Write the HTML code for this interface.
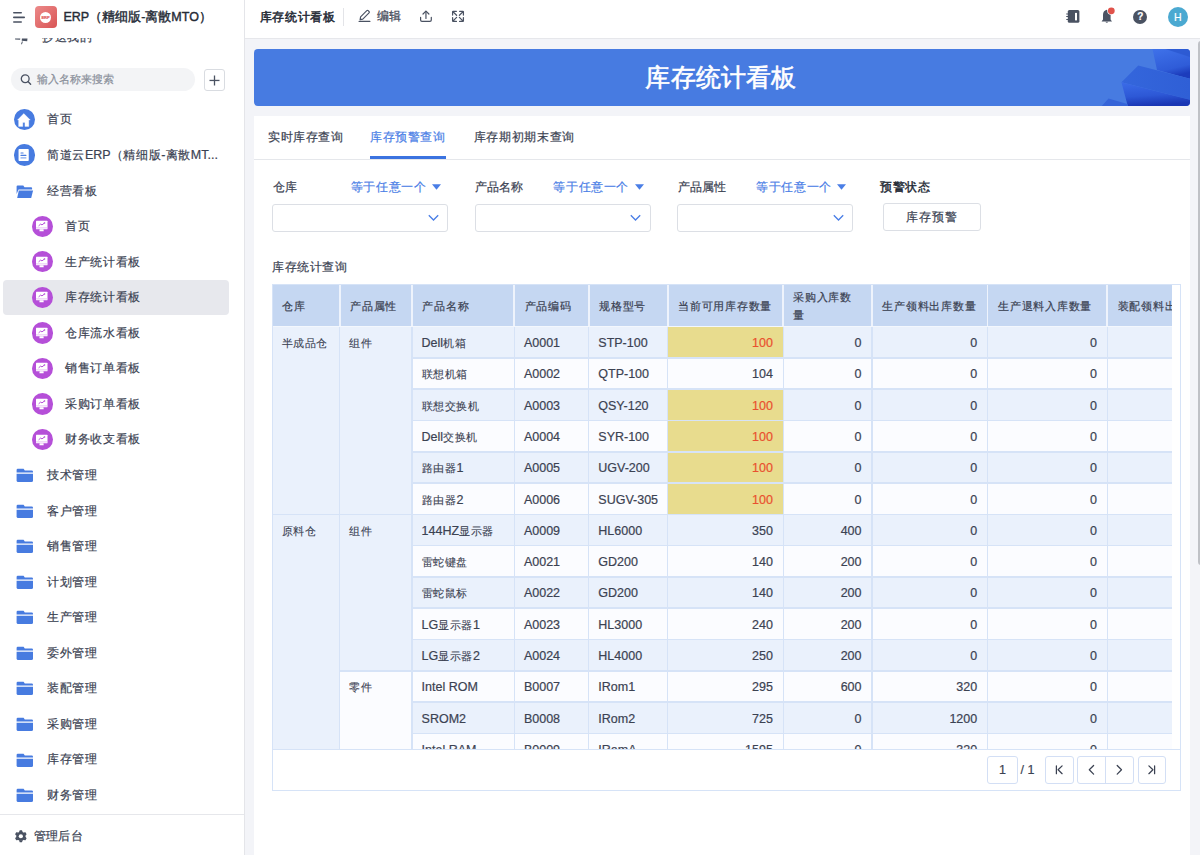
<!DOCTYPE html><html><head><meta charset="utf-8"><style>
*{box-sizing:border-box;margin:0;padding:0}
html,body{width:1200px;height:855px;overflow:hidden}
body{position:relative;background:#f3f4f8;font-family:"Liberation Sans",sans-serif;color:#3b4252;font-size:12.5px;-webkit-text-stroke-width:0.2px}
.a{position:absolute;white-space:nowrap}
#side{left:0;top:0;width:245px;height:855px;background:#fff;border-right:1px solid #e4e5e9;overflow:hidden}
#top{left:245px;top:0;width:955px;height:39px;background:#fff;border-bottom:1px solid #e6e7eb}
#banner{left:254px;top:48.5px;width:935.5px;height:57.4px;background:#477be1;border-radius:4px;overflow:hidden}
#card{left:254px;top:115.5px;width:935.5px;height:740px;background:#fff}
.nt{font-size:12.5px;line-height:17px;color:#3b4252}
.tb{border-collapse:separate;border-spacing:0}
</style></head><body>
<div id="side" class="a">
<div class="a" style="left:0;top:37.5px;width:244px;height:8px;overflow:hidden"><div class="a nt" style="left:42px;top:-8.2px;font-size:12px;letter-spacing:0.66px">抄送我的</div><svg class="a" style="left:0;top:0" width="40" height="8" viewBox="0 37.5 40 8"><g fill="#4a5262"><path d="M15 38 L20.3 38 L20.1 39.3 L15.1 39.1 Z"/><path d="M21.9 37.9 L27.5 38.1 L27.2 40.8 L21.7 40.3 Z"/><path d="M21.9 40.9 L22.9 41.1 L21.9 43.9 L21.1 43.6 Z"/></g></svg></div>
<svg class="a" style="left:12px;top:11px" width="14" height="13" viewBox="0 0 14 13"><rect x="1" y="1" width="9" height="1.6" rx=".8" fill="#4a5262"/><rect x="1" y="5.6" width="12" height="1.6" rx=".8" fill="#4a5262"/><rect x="1" y="10.2" width="9" height="1.6" rx=".8" fill="#4a5262"/></svg>
<div class="a" style="left:35px;top:6px;width:21.5px;height:22px;border-radius:4px;background:linear-gradient(135deg,#ec8a8a,#d95555)"><div class="a" style="left:4.8px;top:5.5px;width:11.5px;height:11.5px;border-radius:50%;background:#fff;font-size:4px;line-height:11.5px;text-align:center;color:#e06060;font-weight:bold">ERP</div></div>
<div class="a" style="left:63.5px;top:9px;font-size:12.5px;line-height:17px;-webkit-text-stroke-width:0.4px;color:#252b36">ERP（精细版-离散MTO）</div>
<div class="a" style="left:10.5px;top:68px;width:184px;height:22.5px;border-radius:12px;background:#f3f4f6"></div>
<svg class="a" style="left:19.5px;top:74px" width="13" height="11" viewBox="0 0 13 11"><circle cx="5.2" cy="4.8" r="3.9" fill="none" stroke="#4a5262" stroke-width="1.3"/><line x1="8" y1="7.6" x2="10.6" y2="10.2" stroke="#4a5262" stroke-width="1.4" stroke-linecap="round"/></svg>
<div class="a" style="left:36.5px;top:72px;font-size:10.8px;line-height:14px;color:#8a909b">输入名称来搜索</div>
<div class="a" style="left:204px;top:69px;width:20.5px;height:21.5px;border:1px solid #d9dce1;border-radius:3px;background:#fff"></div>
<svg class="a" style="left:209px;top:75px" width="11" height="11" viewBox="0 0 11 11"><rect x="0.5" y="4.8" width="10" height="1.3" fill="#4a5262"/><rect x="4.85" y="0.5" width="1.3" height="10" fill="#4a5262"/></svg>
<div class="a" style="left:13.8px;top:109.0px;width:21px;height:21px;border-radius:50%;background:#477be0"></div><svg class="a" style="left:17.3px;top:112.5px" width="14" height="14" viewBox="0 0 14 14"><path d="M6.8 0.45 L13.3 7.05 L11.8 7.05 L11.8 13.45 L7.9 13.45 L7.9 9.45 L5.8 9.45 L5.8 13.45 L1.6 13.45 L1.6 7.05 L0.45 7.05 Z" fill="#fff" stroke="#fff" stroke-width="0.3" stroke-linejoin="round"/></svg>
<div class="a nt" style="left:47px;top:111.4px"><span style="font-size:12px;letter-spacing:0.66px">首页</span></div>
<div class="a" style="left:13.700000000000001px;top:144.36px;width:21.2px;height:21.4px;border-radius:50%;background:#477be0"></div><svg class="a" style="left:17.3px;top:148.06px" width="14" height="14" viewBox="0 0 14 14"><rect x="1.55" y="1" width="10.2" height="12" rx="0.8" fill="#fff"/><rect x="3.45" y="4.4" width="3.2" height="1.1" rx=".5" fill="#477be0"/><rect x="3.45" y="6.75" width="6" height="1.2" rx=".5" fill="#477be0"/><rect x="3.45" y="9.2" width="6" height="1.4" rx=".5" fill="#86a9ee"/></svg>
<div class="a nt" style="left:47px;top:146.96px"><span style="font-size:12px;letter-spacing:0.66px">简道云</span>ERP<span style="font-size:12px;letter-spacing:0.66px">（精细版</span>-<span style="font-size:12px;letter-spacing:0.66px">离散</span>MT...</div>
<svg class="a" style="left:15.5px;top:183.62px" width="18" height="15" viewBox="0 0 18 15"><path d="M0.6 2.4 Q0.6 1.4 1.6 1.4 L7.3 1.4 L8.5 3.2 L15.1 3.2 Q16.1 3.2 16.1 4.2 L16.1 5.4 L2.6 5.4 L0.6 10 Z" fill="#477be0"/><path d="M2.8 6.6 L17.1 6.6 L15.2 13.9 L1.2 13.9 Z" fill="#477be0"/></svg>
<div class="a nt" style="left:47px;top:182.52px"><span style="font-size:12px;letter-spacing:0.66px">经营看板</span></div>
<div class="a" style="left:31.5px;top:215.53px;width:21.2px;height:21.3px;border-radius:50%;background:#b54fd8"></div><svg class="a" style="left:35.1px;top:219.18px" width="14" height="14" viewBox="0 0 14 14"><rect x="1" y="1.85" width="11.5" height="8.5" rx="0.5" fill="#fff"/><rect x="1" y="8.5" width="11.5" height="0.8" fill="#e2b6f2"/><path d="M3.9 6.6 L5.6 5.1 L7 5.9 L9.2 4.2" stroke="#b54fd8" stroke-width="1" fill="none" stroke-linecap="round"/><circle cx="9.5" cy="4" r="0.8" fill="#b54fd8"/><path d="M4.6 10.3 L8.5 10.3 L8.7 12.3 L4.4 12.3 Z" fill="#fff"/></svg>
<div class="a nt" style="left:65px;top:218.08px"><span style="font-size:12px;letter-spacing:0.66px">首页</span></div>
<div class="a" style="left:31.5px;top:251.09px;width:21.2px;height:21.3px;border-radius:50%;background:#b54fd8"></div><svg class="a" style="left:35.1px;top:254.74px" width="14" height="14" viewBox="0 0 14 14"><rect x="1" y="1.85" width="11.5" height="8.5" rx="0.5" fill="#fff"/><rect x="1" y="8.5" width="11.5" height="0.8" fill="#e2b6f2"/><path d="M3.9 6.6 L5.6 5.1 L7 5.9 L9.2 4.2" stroke="#b54fd8" stroke-width="1" fill="none" stroke-linecap="round"/><circle cx="9.5" cy="4" r="0.8" fill="#b54fd8"/><path d="M4.6 10.3 L8.5 10.3 L8.7 12.3 L4.4 12.3 Z" fill="#fff"/></svg>
<div class="a nt" style="left:65px;top:253.64000000000001px"><span style="font-size:12px;letter-spacing:0.66px">生产统计看板</span></div>
<div class="a" style="left:3.2px;top:279.8px;width:225.7px;height:35px;border-radius:4px;background:#e7e8ed"></div>
<div class="a" style="left:31.5px;top:286.65000000000003px;width:21.2px;height:21.3px;border-radius:50%;background:#b54fd8"></div><svg class="a" style="left:35.1px;top:290.3px" width="14" height="14" viewBox="0 0 14 14"><rect x="1" y="1.85" width="11.5" height="8.5" rx="0.5" fill="#fff"/><rect x="1" y="8.5" width="11.5" height="0.8" fill="#e2b6f2"/><path d="M3.9 6.6 L5.6 5.1 L7 5.9 L9.2 4.2" stroke="#b54fd8" stroke-width="1" fill="none" stroke-linecap="round"/><circle cx="9.5" cy="4" r="0.8" fill="#b54fd8"/><path d="M4.6 10.3 L8.5 10.3 L8.7 12.3 L4.4 12.3 Z" fill="#fff"/></svg>
<div class="a nt" style="left:65px;top:289.2px"><span style="font-size:12px;letter-spacing:0.66px">库存统计看板</span></div>
<div class="a" style="left:31.5px;top:322.21000000000004px;width:21.2px;height:21.3px;border-radius:50%;background:#b54fd8"></div><svg class="a" style="left:35.1px;top:325.86px" width="14" height="14" viewBox="0 0 14 14"><rect x="1" y="1.85" width="11.5" height="8.5" rx="0.5" fill="#fff"/><rect x="1" y="8.5" width="11.5" height="0.8" fill="#e2b6f2"/><path d="M3.9 6.6 L5.6 5.1 L7 5.9 L9.2 4.2" stroke="#b54fd8" stroke-width="1" fill="none" stroke-linecap="round"/><circle cx="9.5" cy="4" r="0.8" fill="#b54fd8"/><path d="M4.6 10.3 L8.5 10.3 L8.7 12.3 L4.4 12.3 Z" fill="#fff"/></svg>
<div class="a nt" style="left:65px;top:324.76px"><span style="font-size:12px;letter-spacing:0.66px">仓库流水看板</span></div>
<div class="a" style="left:31.5px;top:357.77000000000004px;width:21.2px;height:21.3px;border-radius:50%;background:#b54fd8"></div><svg class="a" style="left:35.1px;top:361.42px" width="14" height="14" viewBox="0 0 14 14"><rect x="1" y="1.85" width="11.5" height="8.5" rx="0.5" fill="#fff"/><rect x="1" y="8.5" width="11.5" height="0.8" fill="#e2b6f2"/><path d="M3.9 6.6 L5.6 5.1 L7 5.9 L9.2 4.2" stroke="#b54fd8" stroke-width="1" fill="none" stroke-linecap="round"/><circle cx="9.5" cy="4" r="0.8" fill="#b54fd8"/><path d="M4.6 10.3 L8.5 10.3 L8.7 12.3 L4.4 12.3 Z" fill="#fff"/></svg>
<div class="a nt" style="left:65px;top:360.32px"><span style="font-size:12px;letter-spacing:0.66px">销售订单看板</span></div>
<div class="a" style="left:31.5px;top:393.33000000000004px;width:21.2px;height:21.3px;border-radius:50%;background:#b54fd8"></div><svg class="a" style="left:35.1px;top:396.98px" width="14" height="14" viewBox="0 0 14 14"><rect x="1" y="1.85" width="11.5" height="8.5" rx="0.5" fill="#fff"/><rect x="1" y="8.5" width="11.5" height="0.8" fill="#e2b6f2"/><path d="M3.9 6.6 L5.6 5.1 L7 5.9 L9.2 4.2" stroke="#b54fd8" stroke-width="1" fill="none" stroke-linecap="round"/><circle cx="9.5" cy="4" r="0.8" fill="#b54fd8"/><path d="M4.6 10.3 L8.5 10.3 L8.7 12.3 L4.4 12.3 Z" fill="#fff"/></svg>
<div class="a nt" style="left:65px;top:395.88px"><span style="font-size:12px;letter-spacing:0.66px">采购订单看板</span></div>
<div class="a" style="left:31.5px;top:428.89000000000004px;width:21.2px;height:21.3px;border-radius:50%;background:#b54fd8"></div><svg class="a" style="left:35.1px;top:432.54px" width="14" height="14" viewBox="0 0 14 14"><rect x="1" y="1.85" width="11.5" height="8.5" rx="0.5" fill="#fff"/><rect x="1" y="8.5" width="11.5" height="0.8" fill="#e2b6f2"/><path d="M3.9 6.6 L5.6 5.1 L7 5.9 L9.2 4.2" stroke="#b54fd8" stroke-width="1" fill="none" stroke-linecap="round"/><circle cx="9.5" cy="4" r="0.8" fill="#b54fd8"/><path d="M4.6 10.3 L8.5 10.3 L8.7 12.3 L4.4 12.3 Z" fill="#fff"/></svg>
<div class="a nt" style="left:65px;top:431.44px"><span style="font-size:12px;letter-spacing:0.66px">财务收支看板</span></div>
<svg class="a" style="left:15.5px;top:468.1px" width="18" height="15" viewBox="0 0 18 15"><path d="M0.6 2 Q0.6 0.8 1.8 0.8 L7.6 0.8 L8.8 2.6 L15.8 2.6 Q17 2.6 17 3.8 L17 4.5 L0.6 4.5 Z" fill="#477be0"/><path d="M0.6 5.7 L17 5.7 L17 12.4 Q17 13.9 15.5 13.9 L2.1 13.9 Q0.6 13.9 0.6 12.4 Z" fill="#477be0"/></svg>
<div class="a nt" style="left:47px;top:467.0px"><span style="font-size:12px;letter-spacing:0.66px">技术管理</span></div>
<svg class="a" style="left:15.5px;top:503.66px" width="18" height="15" viewBox="0 0 18 15"><path d="M0.6 2 Q0.6 0.8 1.8 0.8 L7.6 0.8 L8.8 2.6 L15.8 2.6 Q17 2.6 17 3.8 L17 4.5 L0.6 4.5 Z" fill="#477be0"/><path d="M0.6 5.7 L17 5.7 L17 12.4 Q17 13.9 15.5 13.9 L2.1 13.9 Q0.6 13.9 0.6 12.4 Z" fill="#477be0"/></svg>
<div class="a nt" style="left:47px;top:502.56px"><span style="font-size:12px;letter-spacing:0.66px">客户管理</span></div>
<svg class="a" style="left:15.5px;top:539.22px" width="18" height="15" viewBox="0 0 18 15"><path d="M0.6 2 Q0.6 0.8 1.8 0.8 L7.6 0.8 L8.8 2.6 L15.8 2.6 Q17 2.6 17 3.8 L17 4.5 L0.6 4.5 Z" fill="#477be0"/><path d="M0.6 5.7 L17 5.7 L17 12.4 Q17 13.9 15.5 13.9 L2.1 13.9 Q0.6 13.9 0.6 12.4 Z" fill="#477be0"/></svg>
<div class="a nt" style="left:47px;top:538.12px"><span style="font-size:12px;letter-spacing:0.66px">销售管理</span></div>
<svg class="a" style="left:15.5px;top:574.78px" width="18" height="15" viewBox="0 0 18 15"><path d="M0.6 2 Q0.6 0.8 1.8 0.8 L7.6 0.8 L8.8 2.6 L15.8 2.6 Q17 2.6 17 3.8 L17 4.5 L0.6 4.5 Z" fill="#477be0"/><path d="M0.6 5.7 L17 5.7 L17 12.4 Q17 13.9 15.5 13.9 L2.1 13.9 Q0.6 13.9 0.6 12.4 Z" fill="#477be0"/></svg>
<div class="a nt" style="left:47px;top:573.68px"><span style="font-size:12px;letter-spacing:0.66px">计划管理</span></div>
<svg class="a" style="left:15.5px;top:610.34px" width="18" height="15" viewBox="0 0 18 15"><path d="M0.6 2 Q0.6 0.8 1.8 0.8 L7.6 0.8 L8.8 2.6 L15.8 2.6 Q17 2.6 17 3.8 L17 4.5 L0.6 4.5 Z" fill="#477be0"/><path d="M0.6 5.7 L17 5.7 L17 12.4 Q17 13.9 15.5 13.9 L2.1 13.9 Q0.6 13.9 0.6 12.4 Z" fill="#477be0"/></svg>
<div class="a nt" style="left:47px;top:609.24px"><span style="font-size:12px;letter-spacing:0.66px">生产管理</span></div>
<svg class="a" style="left:15.5px;top:645.9000000000001px" width="18" height="15" viewBox="0 0 18 15"><path d="M0.6 2 Q0.6 0.8 1.8 0.8 L7.6 0.8 L8.8 2.6 L15.8 2.6 Q17 2.6 17 3.8 L17 4.5 L0.6 4.5 Z" fill="#477be0"/><path d="M0.6 5.7 L17 5.7 L17 12.4 Q17 13.9 15.5 13.9 L2.1 13.9 Q0.6 13.9 0.6 12.4 Z" fill="#477be0"/></svg>
<div class="a nt" style="left:47px;top:644.8000000000001px"><span style="font-size:12px;letter-spacing:0.66px">委外管理</span></div>
<svg class="a" style="left:15.5px;top:681.46px" width="18" height="15" viewBox="0 0 18 15"><path d="M0.6 2 Q0.6 0.8 1.8 0.8 L7.6 0.8 L8.8 2.6 L15.8 2.6 Q17 2.6 17 3.8 L17 4.5 L0.6 4.5 Z" fill="#477be0"/><path d="M0.6 5.7 L17 5.7 L17 12.4 Q17 13.9 15.5 13.9 L2.1 13.9 Q0.6 13.9 0.6 12.4 Z" fill="#477be0"/></svg>
<div class="a nt" style="left:47px;top:680.36px"><span style="font-size:12px;letter-spacing:0.66px">装配管理</span></div>
<svg class="a" style="left:15.5px;top:717.02px" width="18" height="15" viewBox="0 0 18 15"><path d="M0.6 2 Q0.6 0.8 1.8 0.8 L7.6 0.8 L8.8 2.6 L15.8 2.6 Q17 2.6 17 3.8 L17 4.5 L0.6 4.5 Z" fill="#477be0"/><path d="M0.6 5.7 L17 5.7 L17 12.4 Q17 13.9 15.5 13.9 L2.1 13.9 Q0.6 13.9 0.6 12.4 Z" fill="#477be0"/></svg>
<div class="a nt" style="left:47px;top:715.92px"><span style="font-size:12px;letter-spacing:0.66px">采购管理</span></div>
<svg class="a" style="left:15.5px;top:752.58px" width="18" height="15" viewBox="0 0 18 15"><path d="M0.6 2 Q0.6 0.8 1.8 0.8 L7.6 0.8 L8.8 2.6 L15.8 2.6 Q17 2.6 17 3.8 L17 4.5 L0.6 4.5 Z" fill="#477be0"/><path d="M0.6 5.7 L17 5.7 L17 12.4 Q17 13.9 15.5 13.9 L2.1 13.9 Q0.6 13.9 0.6 12.4 Z" fill="#477be0"/></svg>
<div class="a nt" style="left:47px;top:751.48px"><span style="font-size:12px;letter-spacing:0.66px">库存管理</span></div>
<svg class="a" style="left:15.5px;top:788.1400000000001px" width="18" height="15" viewBox="0 0 18 15"><path d="M0.6 2 Q0.6 0.8 1.8 0.8 L7.6 0.8 L8.8 2.6 L15.8 2.6 Q17 2.6 17 3.8 L17 4.5 L0.6 4.5 Z" fill="#477be0"/><path d="M0.6 5.7 L17 5.7 L17 12.4 Q17 13.9 15.5 13.9 L2.1 13.9 Q0.6 13.9 0.6 12.4 Z" fill="#477be0"/></svg>
<div class="a nt" style="left:47px;top:787.0400000000001px"><span style="font-size:12px;letter-spacing:0.66px">财务管理</span></div>
<div class="a" style="left:0;top:813.5px;width:244px;height:1px;background:#e6e7eb"></div>
<svg class="a" style="left:11px;top:826px" width="20" height="20" viewBox="11 826 20 20"><g transform="translate(20.85 836.25)" fill="#4a5262"><circle r="4.5"/><path d="M-1.9 -4 L-1.1 -6 L1.1 -6 L1.9 -4 Z M-1.9 4 L-1.1 6 L1.1 6 L1.9 4 Z"/><path transform="rotate(60)" d="M-1.9 -4 L-1.1 -6 L1.1 -6 L1.9 -4 Z M-1.9 4 L-1.1 6 L1.1 6 L1.9 4 Z"/><path transform="rotate(120)" d="M-1.9 -4 L-1.1 -6 L1.1 -6 L1.9 -4 Z M-1.9 4 L-1.1 6 L1.1 6 L1.9 4 Z"/><circle r="2.1" fill="#fff"/></g></svg>
<div class="a nt" style="left:33.5px;top:828.3px;font-size:12px;letter-spacing:0.4px">管理后台</div>
</div>
<div id="top" class="a"></div>
<div class="a" style="left:259.6px;top:8.8px;font-size:12px;line-height:17px;letter-spacing:0.68px;-webkit-text-stroke-width:0.5px;color:#252b36">库存统计看板</div>
<div class="a" style="left:343px;top:8px;width:1px;height:17.5px;background:#e3e4e8"></div>
<svg class="a" style="left:355px;top:6px" width="20" height="20" viewBox="355 6 20 20"><path d="M360.6 16.9 L366.8 10.7 Q367.5 10 368.2 10.7 L369.0 11.5 Q369.7 12.2 369.0 12.9 L362.8 19.1 L360.1 19.6 Z" fill="none" stroke="#4a5262" stroke-width="1.15" stroke-linejoin="round"/><line x1="359.1" y1="21.4" x2="369.9" y2="21.4" stroke="#4a5262" stroke-width="1.15" stroke-linecap="round"/></svg>
<div class="a" style="left:376.9px;top:7.6px;font-size:12px;line-height:17px">编辑</div>
<svg class="a" style="left:416px;top:6px" width="20" height="20" viewBox="416 6 20 20"><path d="M420.6 17.3 L420.6 19.9 Q420.6 21.3 422 21.3 L429.9 21.3 Q431.3 21.3 431.3 19.9 L431.3 17.3" fill="none" stroke="#4a5262" stroke-width="1.2" stroke-linecap="round"/><line x1="425.95" y1="11.4" x2="425.95" y2="18.4" stroke="#4a5262" stroke-width="1.2" stroke-linecap="round"/><path d="M423 14 L425.95 11.05 L428.9 14" fill="none" stroke="#4a5262" stroke-width="1.2" stroke-linecap="round" stroke-linejoin="round"/></svg>
<svg class="a" style="left:448px;top:6px" width="20" height="20" viewBox="448 6 20 20"><g fill="none" stroke="#4a5262" stroke-width="1.25" stroke-linecap="round" stroke-linejoin="round"><path d="M452.6 15 L452.6 11.8 Q452.6 11.3 453.1 11.3 L456.4 11.3 M452.9 11.6 L456.6 15.3"/><path d="M459.6 11.3 L462.9 11.3 Q463.4 11.3 463.4 11.8 L463.4 15 M463.1 11.6 L459.4 15.3"/><path d="M452.6 17.6 L452.6 20.9 Q452.6 21.4 453.1 21.4 L456.4 21.4 M452.9 21.1 L456.6 17.4"/><path d="M459.6 21.4 L462.9 21.4 Q463.4 21.4 463.4 20.9 L463.4 17.6 M463.1 21.1 L459.4 17.4"/></g></svg>
<svg class="a" style="left:1062px;top:4px" width="24" height="24" viewBox="1062 4 24 24"><rect x="1067.8" y="10" width="11.6" height="12.85" rx="1.6" fill="#4a5262"/><rect x="1075" y="12.9" width="2" height="7.5" fill="#fff"/><rect x="1066.1" y="13.4" width="2.2" height="1" rx=".4" fill="#4a5262"/><rect x="1066.1" y="16.1" width="2.2" height="1" rx=".4" fill="#4a5262"/><rect x="1066.1" y="19" width="2.2" height="1" rx=".4" fill="#4a5262"/></svg>
<svg class="a" style="left:1096px;top:4px" width="24" height="24" viewBox="1096 4 24 24"><path d="M1106.8 9.8 Q1103 10.6 1103 15 L1103 19.6 L1101.6 21.6 L1112 21.6 L1110.6 19.6 L1110.6 15 Q1110.6 10.6 1106.8 9.8 Z" fill="#4a5262"/><path d="M1105.3 21.8 Q1106.8 23.9 1108.3 21.8 Z" fill="#4a5262"/><circle cx="1111.3" cy="10.8" r="4.1" fill="#fff"/><circle cx="1111.3" cy="10.8" r="3.4" fill="#e0524a"/></svg>
<div class="a" style="left:1133.4px;top:9.6px;width:14px;height:14px;border-radius:50%;background:#4a5262;color:#fff;font-size:10px;line-height:14px;text-align:center;font-weight:bold">?</div>
<div class="a" style="left:1167.8px;top:6.9px;width:20px;height:20px;border-radius:50%;background:#4ba9d1;color:#fff;font-size:10.5px;line-height:20px;text-align:center">H</div>
<div id="banner" class="a"><div class="a" style="left:0;top:0;width:934px;height:57.4px;text-align:center;font-size:25.2px;line-height:57.4px;letter-spacing:0.2px;-webkit-text-stroke-width:0.6px;color:#fff">库存统计看板</div><svg class="a" style="left:835.5px;top:0" width="100" height="57.4" viewBox="1090 48.5 100 57.4"><defs><linearGradient id="g1" x1="0" y1="0" x2="0.3" y2="1"><stop offset="0" stop-color="#3f72ea"/><stop offset="0.75" stop-color="#2f5cd8"/><stop offset="1" stop-color="#1c3cbc"/></linearGradient><linearGradient id="g2" x1="0" y1="0" x2="0.2" y2="1"><stop offset="0" stop-color="#3b6ce8"/><stop offset="0.6" stop-color="#2d58d6"/><stop offset="1" stop-color="#1a36b4"/></linearGradient><linearGradient id="g3" x1="0" y1="0" x2="1" y2="0"><stop offset="0" stop-color="#3466dc"/><stop offset="1" stop-color="#2f5fd6"/></linearGradient></defs><polygon points="1152.4,48 1190,48 1190,78.3 1157,69.5" fill="url(#g1)"/><polygon points="1164,48 1190,48 1190,56.6" fill="#2b57cf" opacity="0.8"/><polygon points="1121.4,81.8 1138.2,65 1190,78.3 1190,99.3" fill="url(#g3)"/><polygon points="1121.4,81.8 1190,99.3 1190,106 1127.9,106" fill="url(#g2)"/><polygon points="1101.4,106 1108.5,98 1127.3,103.5 1127.9,106" fill="#3564d8"/></svg></div>
<div id="card" class="a"></div>
<div class="a" style="left:268px;top:127.75px;font-size:12px;line-height:18px;letter-spacing:0.6px;color:#3b4252;">实时库存查询</div>
<div class="a" style="left:370px;top:127.75px;font-size:12px;line-height:18px;letter-spacing:0.6px;color:#4a7ee6;">库存预警查询</div>
<div class="a" style="left:473.6px;top:127.75px;font-size:12px;line-height:18px;letter-spacing:0.69px;color:#3b4252;">库存期初期末查询</div>
<div class="a" style="left:370px;top:156px;width:76.4px;height:2.6px;background:#3b73e0"></div>
<div class="a" style="left:254px;top:158.8px;width:935.5px;height:1px;background:#e5e7eb"></div>
<div class="a" style="left:272.5px;top:177.6px;font-size:12px;line-height:18px;letter-spacing:0px;color:#3b4252;">仓库</div>
<div class="a" style="left:350.8px;top:177.6px;font-size:12px;line-height:18px;letter-spacing:0.6px;color:#4a7ee6;">等于任意一个</div>
<svg class="a" style="left:432.0px;top:184px" width="9" height="6" viewBox="0 0 9 6"><path d="M0 0.2 L9 0.2 L4.5 5.7 Z" fill="#4a7ee6"/></svg>
<div class="a" style="left:272.0px;top:204.2px;width:176px;height:28.3px;border:1px solid #dcdfe5;border-radius:3px;background:#fff"></div>
<svg class="a" style="left:427.5px;top:214px" width="11" height="8" viewBox="0 0 11 8"><path d="M0.8 1.2 L5.5 6 L10.2 1.2" fill="none" stroke="#4a7ee6" stroke-width="1.3"/></svg>
<div class="a" style="left:475.16999999999996px;top:177.6px;font-size:12px;line-height:18px;letter-spacing:0px;color:#3b4252;">产品名称</div>
<div class="a" style="left:553.4699999999999px;top:177.6px;font-size:12px;line-height:18px;letter-spacing:0.6px;color:#4a7ee6;">等于任意一个</div>
<svg class="a" style="left:634.67px;top:184px" width="9" height="6" viewBox="0 0 9 6"><path d="M0 0.2 L9 0.2 L4.5 5.7 Z" fill="#4a7ee6"/></svg>
<div class="a" style="left:474.66999999999996px;top:204.2px;width:176px;height:28.3px;border:1px solid #dcdfe5;border-radius:3px;background:#fff"></div>
<svg class="a" style="left:630.17px;top:214px" width="11" height="8" viewBox="0 0 11 8"><path d="M0.8 1.2 L5.5 6 L10.2 1.2" fill="none" stroke="#4a7ee6" stroke-width="1.3"/></svg>
<div class="a" style="left:677.8399999999999px;top:177.6px;font-size:12px;line-height:18px;letter-spacing:0px;color:#3b4252;">产品属性</div>
<div class="a" style="left:756.1399999999999px;top:177.6px;font-size:12px;line-height:18px;letter-spacing:0.6px;color:#4a7ee6;">等于任意一个</div>
<svg class="a" style="left:837.3399999999999px;top:184px" width="9" height="6" viewBox="0 0 9 6"><path d="M0 0.2 L9 0.2 L4.5 5.7 Z" fill="#4a7ee6"/></svg>
<div class="a" style="left:677.3399999999999px;top:204.2px;width:176px;height:28.3px;border:1px solid #dcdfe5;border-radius:3px;background:#fff"></div>
<svg class="a" style="left:832.8399999999999px;top:214px" width="11" height="8" viewBox="0 0 11 8"><path d="M0.8 1.2 L5.5 6 L10.2 1.2" fill="none" stroke="#4a7ee6" stroke-width="1.3"/></svg>
<div class="a" style="left:880px;top:177.6px;font-size:12px;line-height:18px;letter-spacing:0.6px;color:#252b36;-webkit-text-stroke-width:0.4px;">预警状态</div>
<div class="a" style="left:883px;top:203.4px;width:98px;height:27.6px;border:1px solid #dcdfe5;border-radius:3px;background:#fff"></div>
<div class="a" style="left:906.4px;top:208.2px;font-size:12px;line-height:18px;letter-spacing:0.85px;color:#3b4252;">库存预警</div>
<div class="a" style="left:272px;top:257.7px;font-size:12px;line-height:18px;letter-spacing:0.6px;color:#3b4252;">库存统计查询</div>
<div class="a" style="left:272px;top:284.2px;width:909.2px;height:507.00000000000006px;border:1px solid #d6e3f7;background:#fff"></div>
<div class="a" style="left:273px;top:284.7px;width:899px;height:464.8px;overflow:hidden">
<div class="a" style="left:-1px;top:-0.5px;width:968px;height:41.55000000000001px;background:#c5d7f2"></div>
<div class="a" style="left:139px;top:41.900000000000034px;width:828px;height:31.295000000000016px;background:#eaf1fc"></div>
<div class="a" style="left:394.70000000000005px;top:41.900000000000034px;width:115.59999999999991px;height:31.295000000000016px;background:#e8dc8e"></div>
<div class="a" style="left:139px;top:73.19500000000005px;width:828px;height:31.295000000000016px;background:#fbfcff"></div>
<div class="a" style="left:139px;top:104.49000000000007px;width:828px;height:31.295000000000016px;background:#eaf1fc"></div>
<div class="a" style="left:394.70000000000005px;top:104.49000000000007px;width:115.59999999999991px;height:31.295000000000016px;background:#e8dc8e"></div>
<div class="a" style="left:139px;top:135.78500000000003px;width:828px;height:31.295000000000016px;background:#fbfcff"></div>
<div class="a" style="left:394.70000000000005px;top:135.78500000000003px;width:115.59999999999991px;height:31.295000000000016px;background:#e8dc8e"></div>
<div class="a" style="left:139px;top:167.08000000000004px;width:828px;height:31.295000000000016px;background:#eaf1fc"></div>
<div class="a" style="left:394.70000000000005px;top:167.08000000000004px;width:115.59999999999991px;height:31.295000000000016px;background:#e8dc8e"></div>
<div class="a" style="left:139px;top:198.37500000000006px;width:828px;height:31.29499999999996px;background:#fbfcff"></div>
<div class="a" style="left:394.70000000000005px;top:198.37500000000006px;width:115.59999999999991px;height:31.29499999999996px;background:#e8dc8e"></div>
<div class="a" style="left:139px;top:229.67000000000002px;width:828px;height:31.29499999999996px;background:#eaf1fc"></div>
<div class="a" style="left:139px;top:260.965px;width:828px;height:31.29499999999996px;background:#fbfcff"></div>
<div class="a" style="left:139px;top:292.26000000000005px;width:828px;height:31.29499999999996px;background:#eaf1fc"></div>
<div class="a" style="left:139px;top:323.5550000000001px;width:828px;height:31.29499999999996px;background:#fbfcff"></div>
<div class="a" style="left:139px;top:354.8500000000001px;width:828px;height:31.29499999999996px;background:#eaf1fc"></div>
<div class="a" style="left:139px;top:386.14500000000004px;width:828px;height:31.29499999999996px;background:#fbfcff"></div>
<div class="a" style="left:139px;top:417.4400000000001px;width:828px;height:31.29499999999996px;background:#eaf1fc"></div>
<div class="a" style="left:139px;top:448.73500000000007px;width:828px;height:31.29499999999996px;background:#fbfcff"></div>
<div class="a" style="left:-1px;top:41.900000000000034px;width:67.80000000000001px;height:187.76999999999998px;background:#eaf1fc"></div>
<div class="a" style="left:-1px;top:229.67000000000002px;width:67.80000000000001px;height:250.36px;background:#eaf1fc"></div>
<div class="a" style="left:66.80000000000001px;top:41.900000000000034px;width:72.19999999999999px;height:187.76999999999998px;background:#eaf1fc"></div>
<div class="a" style="left:66.80000000000001px;top:229.67000000000002px;width:72.19999999999999px;height:156.47500000000002px;background:#eaf1fc"></div>
<div class="a" style="left:66.80000000000001px;top:386.14500000000004px;width:72.19999999999999px;height:93.88499999999999px;background:#fbfcff"></div>
<div class="a" style="left:-1px;top:41.05000000000001px;width:968px;height:1.7000000000000455px;background:#f3f7fd"></div>
<div class="a" style="left:139px;top:72.39500000000004px;width:828px;height:1.6000000000000227px;background:#d6e3f7"></div>
<div class="a" style="left:139px;top:103.69000000000005px;width:828px;height:1.6000000000000227px;background:#d6e3f7"></div>
<div class="a" style="left:139px;top:134.985px;width:828px;height:1.6000000000000227px;background:#d6e3f7"></div>
<div class="a" style="left:139px;top:166.28000000000003px;width:828px;height:1.6000000000000227px;background:#d6e3f7"></div>
<div class="a" style="left:139px;top:197.57500000000005px;width:828px;height:1.6000000000000227px;background:#d6e3f7"></div>
<div class="a" style="left:139px;top:228.87000000000006px;width:828px;height:1.599999999999909px;background:#d6e3f7"></div>
<div class="a" style="left:139px;top:260.165px;width:828px;height:1.599999999999909px;background:#d6e3f7"></div>
<div class="a" style="left:139px;top:291.4600000000001px;width:828px;height:1.599999999999909px;background:#d6e3f7"></div>
<div class="a" style="left:139px;top:322.75500000000017px;width:828px;height:1.599999999999909px;background:#d6e3f7"></div>
<div class="a" style="left:139px;top:354.0500000000001px;width:828px;height:1.599999999999909px;background:#d6e3f7"></div>
<div class="a" style="left:139px;top:385.3450000000001px;width:828px;height:1.599999999999909px;background:#d6e3f7"></div>
<div class="a" style="left:139px;top:416.64000000000016px;width:828px;height:1.599999999999909px;background:#d6e3f7"></div>
<div class="a" style="left:139px;top:447.9350000000001px;width:828px;height:1.599999999999909px;background:#d6e3f7"></div>
<div class="a" style="left:139px;top:479.2300000000001px;width:828px;height:1.599999999999909px;background:#d6e3f7"></div>
<div class="a" style="left:-1px;top:228.87000000000006px;width:67.80000000000001px;height:1.599999999999909px;background:#d6e3f7"></div>
<div class="a" style="left:-1px;top:479.2300000000001px;width:67.80000000000001px;height:1.599999999999909px;background:#d6e3f7"></div>
<div class="a" style="left:66.80000000000001px;top:228.87000000000006px;width:72.19999999999999px;height:1.599999999999909px;background:#d6e3f7"></div>
<div class="a" style="left:66.80000000000001px;top:385.3450000000001px;width:72.19999999999999px;height:1.599999999999909px;background:#d6e3f7"></div>
<div class="a" style="left:66.80000000000001px;top:479.2300000000001px;width:72.19999999999999px;height:1.599999999999909px;background:#d6e3f7"></div>
<div class="a" style="left:65.90000000000003px;top:-0.5px;width:1.7999999999999545px;height:41.55000000000001px;background:#eef3fc"></div>
<div class="a" style="left:66.10000000000002px;top:42.75000000000006px;width:1.3999999999999773px;height:572.55px;background:#d6e3f7"></div>
<div class="a" style="left:138.10000000000002px;top:-0.5px;width:1.7999999999999545px;height:41.55000000000001px;background:#eef3fc"></div>
<div class="a" style="left:138.3px;top:42.75000000000006px;width:1.3999999999999773px;height:572.55px;background:#d6e3f7"></div>
<div class="a" style="left:240.39999999999998px;top:-0.5px;width:1.7999999999999545px;height:41.55000000000001px;background:#eef3fc"></div>
<div class="a" style="left:240.5999999999999px;top:42.75000000000006px;width:1.400000000000091px;height:572.55px;background:#d6e3f7"></div>
<div class="a" style="left:314.80000000000007px;top:-0.5px;width:1.7999999999999545px;height:41.55000000000001px;background:#eef3fc"></div>
<div class="a" style="left:315.0px;top:42.75000000000006px;width:1.400000000000091px;height:572.55px;background:#d6e3f7"></div>
<div class="a" style="left:393.80000000000007px;top:-0.5px;width:1.7999999999999545px;height:41.55000000000001px;background:#eef3fc"></div>
<div class="a" style="left:394.0px;top:42.75000000000006px;width:1.400000000000091px;height:572.55px;background:#d6e3f7"></div>
<div class="a" style="left:509.4px;top:-0.5px;width:1.7999999999999545px;height:41.55000000000001px;background:#eef3fc"></div>
<div class="a" style="left:509.5999999999999px;top:42.75000000000006px;width:1.400000000000091px;height:572.55px;background:#d6e3f7"></div>
<div class="a" style="left:598.0px;top:-0.5px;width:1.7999999999999545px;height:41.55000000000001px;background:#eef3fc"></div>
<div class="a" style="left:598.1999999999999px;top:42.75000000000006px;width:1.400000000000091px;height:572.55px;background:#d6e3f7"></div>
<div class="a" style="left:713.7px;top:-0.5px;width:1.7999999999999545px;height:41.55000000000001px;background:#eef3fc"></div>
<div class="a" style="left:713.9px;top:42.75000000000006px;width:1.400000000000091px;height:572.55px;background:#d6e3f7"></div>
<div class="a" style="left:833.3999999999999px;top:-0.5px;width:1.800000000000182px;height:41.55000000000001px;background:#eef3fc"></div>
<div class="a" style="left:833.5999999999999px;top:42.75000000000006px;width:1.400000000000091px;height:572.55px;background:#d6e3f7"></div>
<div class="a" style="left:9.399999999999977px;top:12.800000000000011px;font-size:11px;line-height:18px;letter-spacing:0.75px;color:#3b4252">仓库</div>
<div class="a" style="left:77.19999999999999px;top:12.800000000000011px;font-size:11px;line-height:18px;letter-spacing:0.75px;color:#3b4252">产品属性</div>
<div class="a" style="left:149.39999999999998px;top:12.800000000000011px;font-size:11px;line-height:18px;letter-spacing:0.75px;color:#3b4252">产品名称</div>
<div class="a" style="left:251.69999999999993px;top:12.800000000000011px;font-size:11px;line-height:18px;letter-spacing:0.75px;color:#3b4252">产品编码</div>
<div class="a" style="left:326.1px;top:12.800000000000011px;font-size:11px;line-height:18px;letter-spacing:0.75px;color:#3b4252">规格型号</div>
<div class="a" style="left:405.1px;top:12.800000000000011px;font-size:11px;line-height:18px;letter-spacing:0.75px;color:#3b4252">当前可用库存数量</div>
<div class="a" style="left:609.3px;top:12.800000000000011px;font-size:11px;line-height:18px;letter-spacing:0.75px;color:#3b4252">生产领料出库数量</div>
<div class="a" style="left:725.0px;top:12.800000000000011px;font-size:11px;line-height:18px;letter-spacing:0.75px;color:#3b4252">生产退料入库数量</div>
<div class="a" style="left:844.7px;top:12.800000000000011px;font-size:11px;line-height:18px;letter-spacing:0.75px;color:#3b4252">装配领料出库数量</div>
<div class="a" style="left:520.0px;top:3.650000000000034px;font-size:11px;line-height:18px;letter-spacing:0.75px;color:#3b4252">采购入库数<br>量</div>
<div class="a" style="left:8.600000000000023px;top:49.44749999999999px;font-size:12.5px;line-height:18px;color:#3b4252"><span style="font-size:11px;letter-spacing:0.6px;-webkit-text-stroke-width:0.1px">半成品仓</span></div>
<div class="a" style="left:76.40000000000003px;top:49.44749999999999px;font-size:12.5px;line-height:18px;color:#3b4252"><span style="font-size:11px;letter-spacing:0.6px;-webkit-text-stroke-width:0.1px">组件</span></div>
<div class="a" style="left:148.60000000000002px;top:49.44749999999999px;font-size:12.5px;line-height:18px;color:#3b4252">Dell<span style="font-size:11px;letter-spacing:0.6px;-webkit-text-stroke-width:0.1px">机箱</span></div>
<div class="a" style="left:250.89999999999998px;top:49.44749999999999px;font-size:12.5px;line-height:18px;color:#3b4252">A0001</div>
<div class="a" style="left:325.30000000000007px;top:49.44749999999999px;font-size:12.5px;line-height:18px;color:#3b4252">STP-100</div>
<div class="a" style="left:299.9px;width:200px;text-align:right;top:49.44749999999999px;font-size:12.5px;line-height:18px;color:#e9502f">100</div>
<div class="a" style="left:388.5px;width:200px;text-align:right;top:49.44749999999999px;font-size:12.5px;line-height:18px;color:#3b4252">0</div>
<div class="a" style="left:504.20000000000005px;width:200px;text-align:right;top:49.44749999999999px;font-size:12.5px;line-height:18px;color:#3b4252">0</div>
<div class="a" style="left:623.8999999999999px;width:200px;text-align:right;top:49.44749999999999px;font-size:12.5px;line-height:18px;color:#3b4252">0</div>
<div class="a" style="left:148.60000000000002px;top:80.7425px;font-size:12.5px;line-height:18px;color:#3b4252"><span style="font-size:11px;letter-spacing:0.6px;-webkit-text-stroke-width:0.1px">联想机箱</span></div>
<div class="a" style="left:250.89999999999998px;top:80.7425px;font-size:12.5px;line-height:18px;color:#3b4252">A0002</div>
<div class="a" style="left:325.30000000000007px;top:80.7425px;font-size:12.5px;line-height:18px;color:#3b4252">QTP-100</div>
<div class="a" style="left:299.9px;width:200px;text-align:right;top:80.7425px;font-size:12.5px;line-height:18px;color:#3b4252">104</div>
<div class="a" style="left:388.5px;width:200px;text-align:right;top:80.7425px;font-size:12.5px;line-height:18px;color:#3b4252">0</div>
<div class="a" style="left:504.20000000000005px;width:200px;text-align:right;top:80.7425px;font-size:12.5px;line-height:18px;color:#3b4252">0</div>
<div class="a" style="left:623.8999999999999px;width:200px;text-align:right;top:80.7425px;font-size:12.5px;line-height:18px;color:#3b4252">0</div>
<div class="a" style="left:148.60000000000002px;top:112.03750000000002px;font-size:12.5px;line-height:18px;color:#3b4252"><span style="font-size:11px;letter-spacing:0.6px;-webkit-text-stroke-width:0.1px">联想交换机</span></div>
<div class="a" style="left:250.89999999999998px;top:112.03750000000002px;font-size:12.5px;line-height:18px;color:#3b4252">A0003</div>
<div class="a" style="left:325.30000000000007px;top:112.03750000000002px;font-size:12.5px;line-height:18px;color:#3b4252">QSY-120</div>
<div class="a" style="left:299.9px;width:200px;text-align:right;top:112.03750000000002px;font-size:12.5px;line-height:18px;color:#e9502f">100</div>
<div class="a" style="left:388.5px;width:200px;text-align:right;top:112.03750000000002px;font-size:12.5px;line-height:18px;color:#3b4252">0</div>
<div class="a" style="left:504.20000000000005px;width:200px;text-align:right;top:112.03750000000002px;font-size:12.5px;line-height:18px;color:#3b4252">0</div>
<div class="a" style="left:623.8999999999999px;width:200px;text-align:right;top:112.03750000000002px;font-size:12.5px;line-height:18px;color:#3b4252">0</div>
<div class="a" style="left:148.60000000000002px;top:143.33249999999998px;font-size:12.5px;line-height:18px;color:#3b4252">Dell<span style="font-size:11px;letter-spacing:0.6px;-webkit-text-stroke-width:0.1px">交换机</span></div>
<div class="a" style="left:250.89999999999998px;top:143.33249999999998px;font-size:12.5px;line-height:18px;color:#3b4252">A0004</div>
<div class="a" style="left:325.30000000000007px;top:143.33249999999998px;font-size:12.5px;line-height:18px;color:#3b4252">SYR-100</div>
<div class="a" style="left:299.9px;width:200px;text-align:right;top:143.33249999999998px;font-size:12.5px;line-height:18px;color:#e9502f">100</div>
<div class="a" style="left:388.5px;width:200px;text-align:right;top:143.33249999999998px;font-size:12.5px;line-height:18px;color:#3b4252">0</div>
<div class="a" style="left:504.20000000000005px;width:200px;text-align:right;top:143.33249999999998px;font-size:12.5px;line-height:18px;color:#3b4252">0</div>
<div class="a" style="left:623.8999999999999px;width:200px;text-align:right;top:143.33249999999998px;font-size:12.5px;line-height:18px;color:#3b4252">0</div>
<div class="a" style="left:148.60000000000002px;top:174.6275px;font-size:12.5px;line-height:18px;color:#3b4252"><span style="font-size:11px;letter-spacing:0.6px;-webkit-text-stroke-width:0.1px">路由器</span>1</div>
<div class="a" style="left:250.89999999999998px;top:174.6275px;font-size:12.5px;line-height:18px;color:#3b4252">A0005</div>
<div class="a" style="left:325.30000000000007px;top:174.6275px;font-size:12.5px;line-height:18px;color:#3b4252">UGV-200</div>
<div class="a" style="left:299.9px;width:200px;text-align:right;top:174.6275px;font-size:12.5px;line-height:18px;color:#e9502f">100</div>
<div class="a" style="left:388.5px;width:200px;text-align:right;top:174.6275px;font-size:12.5px;line-height:18px;color:#3b4252">0</div>
<div class="a" style="left:504.20000000000005px;width:200px;text-align:right;top:174.6275px;font-size:12.5px;line-height:18px;color:#3b4252">0</div>
<div class="a" style="left:623.8999999999999px;width:200px;text-align:right;top:174.6275px;font-size:12.5px;line-height:18px;color:#3b4252">0</div>
<div class="a" style="left:148.60000000000002px;top:205.9225px;font-size:12.5px;line-height:18px;color:#3b4252"><span style="font-size:11px;letter-spacing:0.6px;-webkit-text-stroke-width:0.1px">路由器</span>2</div>
<div class="a" style="left:250.89999999999998px;top:205.9225px;font-size:12.5px;line-height:18px;color:#3b4252">A0006</div>
<div class="a" style="left:325.30000000000007px;top:205.9225px;font-size:12.5px;line-height:18px;color:#3b4252">SUGV-305</div>
<div class="a" style="left:299.9px;width:200px;text-align:right;top:205.9225px;font-size:12.5px;line-height:18px;color:#e9502f">100</div>
<div class="a" style="left:388.5px;width:200px;text-align:right;top:205.9225px;font-size:12.5px;line-height:18px;color:#3b4252">0</div>
<div class="a" style="left:504.20000000000005px;width:200px;text-align:right;top:205.9225px;font-size:12.5px;line-height:18px;color:#3b4252">0</div>
<div class="a" style="left:623.8999999999999px;width:200px;text-align:right;top:205.9225px;font-size:12.5px;line-height:18px;color:#3b4252">0</div>
<div class="a" style="left:8.600000000000023px;top:237.21750000000003px;font-size:12.5px;line-height:18px;color:#3b4252"><span style="font-size:11px;letter-spacing:0.6px;-webkit-text-stroke-width:0.1px">原料仓</span></div>
<div class="a" style="left:76.40000000000003px;top:237.21750000000003px;font-size:12.5px;line-height:18px;color:#3b4252"><span style="font-size:11px;letter-spacing:0.6px;-webkit-text-stroke-width:0.1px">组件</span></div>
<div class="a" style="left:148.60000000000002px;top:237.21750000000003px;font-size:12.5px;line-height:18px;color:#3b4252">144HZ<span style="font-size:11px;letter-spacing:0.6px;-webkit-text-stroke-width:0.1px">显示器</span></div>
<div class="a" style="left:250.89999999999998px;top:237.21750000000003px;font-size:12.5px;line-height:18px;color:#3b4252">A0009</div>
<div class="a" style="left:325.30000000000007px;top:237.21750000000003px;font-size:12.5px;line-height:18px;color:#3b4252">HL6000</div>
<div class="a" style="left:299.9px;width:200px;text-align:right;top:237.21750000000003px;font-size:12.5px;line-height:18px;color:#3b4252">350</div>
<div class="a" style="left:388.5px;width:200px;text-align:right;top:237.21750000000003px;font-size:12.5px;line-height:18px;color:#3b4252">400</div>
<div class="a" style="left:504.20000000000005px;width:200px;text-align:right;top:237.21750000000003px;font-size:12.5px;line-height:18px;color:#3b4252">0</div>
<div class="a" style="left:623.8999999999999px;width:200px;text-align:right;top:237.21750000000003px;font-size:12.5px;line-height:18px;color:#3b4252">0</div>
<div class="a" style="left:148.60000000000002px;top:268.5125px;font-size:12.5px;line-height:18px;color:#3b4252"><span style="font-size:11px;letter-spacing:0.6px;-webkit-text-stroke-width:0.1px">雷蛇键盘</span></div>
<div class="a" style="left:250.89999999999998px;top:268.5125px;font-size:12.5px;line-height:18px;color:#3b4252">A0021</div>
<div class="a" style="left:325.30000000000007px;top:268.5125px;font-size:12.5px;line-height:18px;color:#3b4252">GD200</div>
<div class="a" style="left:299.9px;width:200px;text-align:right;top:268.5125px;font-size:12.5px;line-height:18px;color:#3b4252">140</div>
<div class="a" style="left:388.5px;width:200px;text-align:right;top:268.5125px;font-size:12.5px;line-height:18px;color:#3b4252">200</div>
<div class="a" style="left:504.20000000000005px;width:200px;text-align:right;top:268.5125px;font-size:12.5px;line-height:18px;color:#3b4252">0</div>
<div class="a" style="left:623.8999999999999px;width:200px;text-align:right;top:268.5125px;font-size:12.5px;line-height:18px;color:#3b4252">0</div>
<div class="a" style="left:148.60000000000002px;top:299.80750000000006px;font-size:12.5px;line-height:18px;color:#3b4252"><span style="font-size:11px;letter-spacing:0.6px;-webkit-text-stroke-width:0.1px">雷蛇鼠标</span></div>
<div class="a" style="left:250.89999999999998px;top:299.80750000000006px;font-size:12.5px;line-height:18px;color:#3b4252">A0022</div>
<div class="a" style="left:325.30000000000007px;top:299.80750000000006px;font-size:12.5px;line-height:18px;color:#3b4252">GD200</div>
<div class="a" style="left:299.9px;width:200px;text-align:right;top:299.80750000000006px;font-size:12.5px;line-height:18px;color:#3b4252">140</div>
<div class="a" style="left:388.5px;width:200px;text-align:right;top:299.80750000000006px;font-size:12.5px;line-height:18px;color:#3b4252">200</div>
<div class="a" style="left:504.20000000000005px;width:200px;text-align:right;top:299.80750000000006px;font-size:12.5px;line-height:18px;color:#3b4252">0</div>
<div class="a" style="left:623.8999999999999px;width:200px;text-align:right;top:299.80750000000006px;font-size:12.5px;line-height:18px;color:#3b4252">0</div>
<div class="a" style="left:148.60000000000002px;top:331.10250000000013px;font-size:12.5px;line-height:18px;color:#3b4252">LG<span style="font-size:11px;letter-spacing:0.6px;-webkit-text-stroke-width:0.1px">显示器</span>1</div>
<div class="a" style="left:250.89999999999998px;top:331.10250000000013px;font-size:12.5px;line-height:18px;color:#3b4252">A0023</div>
<div class="a" style="left:325.30000000000007px;top:331.10250000000013px;font-size:12.5px;line-height:18px;color:#3b4252">HL3000</div>
<div class="a" style="left:299.9px;width:200px;text-align:right;top:331.10250000000013px;font-size:12.5px;line-height:18px;color:#3b4252">240</div>
<div class="a" style="left:388.5px;width:200px;text-align:right;top:331.10250000000013px;font-size:12.5px;line-height:18px;color:#3b4252">200</div>
<div class="a" style="left:504.20000000000005px;width:200px;text-align:right;top:331.10250000000013px;font-size:12.5px;line-height:18px;color:#3b4252">0</div>
<div class="a" style="left:623.8999999999999px;width:200px;text-align:right;top:331.10250000000013px;font-size:12.5px;line-height:18px;color:#3b4252">0</div>
<div class="a" style="left:148.60000000000002px;top:362.3975000000001px;font-size:12.5px;line-height:18px;color:#3b4252">LG<span style="font-size:11px;letter-spacing:0.6px;-webkit-text-stroke-width:0.1px">显示器</span>2</div>
<div class="a" style="left:250.89999999999998px;top:362.3975000000001px;font-size:12.5px;line-height:18px;color:#3b4252">A0024</div>
<div class="a" style="left:325.30000000000007px;top:362.3975000000001px;font-size:12.5px;line-height:18px;color:#3b4252">HL4000</div>
<div class="a" style="left:299.9px;width:200px;text-align:right;top:362.3975000000001px;font-size:12.5px;line-height:18px;color:#3b4252">250</div>
<div class="a" style="left:388.5px;width:200px;text-align:right;top:362.3975000000001px;font-size:12.5px;line-height:18px;color:#3b4252">200</div>
<div class="a" style="left:504.20000000000005px;width:200px;text-align:right;top:362.3975000000001px;font-size:12.5px;line-height:18px;color:#3b4252">0</div>
<div class="a" style="left:623.8999999999999px;width:200px;text-align:right;top:362.3975000000001px;font-size:12.5px;line-height:18px;color:#3b4252">0</div>
<div class="a" style="left:76.40000000000003px;top:393.69250000000005px;font-size:12.5px;line-height:18px;color:#3b4252"><span style="font-size:11px;letter-spacing:0.6px;-webkit-text-stroke-width:0.1px">零件</span></div>
<div class="a" style="left:148.60000000000002px;top:393.69250000000005px;font-size:12.5px;line-height:18px;color:#3b4252">Intel ROM</div>
<div class="a" style="left:250.89999999999998px;top:393.69250000000005px;font-size:12.5px;line-height:18px;color:#3b4252">B0007</div>
<div class="a" style="left:325.30000000000007px;top:393.69250000000005px;font-size:12.5px;line-height:18px;color:#3b4252">IRom1</div>
<div class="a" style="left:299.9px;width:200px;text-align:right;top:393.69250000000005px;font-size:12.5px;line-height:18px;color:#3b4252">295</div>
<div class="a" style="left:388.5px;width:200px;text-align:right;top:393.69250000000005px;font-size:12.5px;line-height:18px;color:#3b4252">600</div>
<div class="a" style="left:504.20000000000005px;width:200px;text-align:right;top:393.69250000000005px;font-size:12.5px;line-height:18px;color:#3b4252">320</div>
<div class="a" style="left:623.8999999999999px;width:200px;text-align:right;top:393.69250000000005px;font-size:12.5px;line-height:18px;color:#3b4252">0</div>
<div class="a" style="left:148.60000000000002px;top:424.9875000000001px;font-size:12.5px;line-height:18px;color:#3b4252">SROM2</div>
<div class="a" style="left:250.89999999999998px;top:424.9875000000001px;font-size:12.5px;line-height:18px;color:#3b4252">B0008</div>
<div class="a" style="left:325.30000000000007px;top:424.9875000000001px;font-size:12.5px;line-height:18px;color:#3b4252">IRom2</div>
<div class="a" style="left:299.9px;width:200px;text-align:right;top:424.9875000000001px;font-size:12.5px;line-height:18px;color:#3b4252">725</div>
<div class="a" style="left:388.5px;width:200px;text-align:right;top:424.9875000000001px;font-size:12.5px;line-height:18px;color:#3b4252">0</div>
<div class="a" style="left:504.20000000000005px;width:200px;text-align:right;top:424.9875000000001px;font-size:12.5px;line-height:18px;color:#3b4252">1200</div>
<div class="a" style="left:623.8999999999999px;width:200px;text-align:right;top:424.9875000000001px;font-size:12.5px;line-height:18px;color:#3b4252">0</div>
<div class="a" style="left:148.60000000000002px;top:456.2825000000001px;font-size:12.5px;line-height:18px;color:#3b4252">Intel RAM</div>
<div class="a" style="left:250.89999999999998px;top:456.2825000000001px;font-size:12.5px;line-height:18px;color:#3b4252">B0009</div>
<div class="a" style="left:325.30000000000007px;top:456.2825000000001px;font-size:12.5px;line-height:18px;color:#3b4252">IRamA</div>
<div class="a" style="left:299.9px;width:200px;text-align:right;top:456.2825000000001px;font-size:12.5px;line-height:18px;color:#3b4252">1595</div>
<div class="a" style="left:388.5px;width:200px;text-align:right;top:456.2825000000001px;font-size:12.5px;line-height:18px;color:#3b4252">0</div>
<div class="a" style="left:504.20000000000005px;width:200px;text-align:right;top:456.2825000000001px;font-size:12.5px;line-height:18px;color:#3b4252">320</div>
<div class="a" style="left:623.8999999999999px;width:200px;text-align:right;top:456.2825000000001px;font-size:12.5px;line-height:18px;color:#3b4252">0</div>
</div>
<div class="a" style="left:272px;top:748.9px;width:909.2px;height:1.3px;background:#d6e3f7"></div>
<div class="a" style="left:987.3px;top:756.1px;width:30.300000000000068px;height:27.899999999999977px;border:1px solid #d3dff5;border-radius:3px;background:#fff"></div>
<div class="a" style="left:987.3px;width:30.3px;text-align:center;top:761px;font-size:12.5px;line-height:18px">1</div>
<div class="a" style="left:1020.5px;top:761px;font-size:12.5px;line-height:18px">/ 1</div>
<div class="a" style="left:1045px;top:756.1px;width:28.5px;height:27.899999999999977px;border:1px solid #d3dff5;border-radius:3px;background:#fff"></div>
<div class="a" style="left:1077.2px;top:756.1px;width:56.399999999999864px;height:27.899999999999977px;border:1px solid #d3dff5;border-radius:3px;background:#fff"></div>
<div class="a" style="left:1105px;top:756.1px;width:1px;height:27.9px;background:#d3dff5"></div>
<div class="a" style="left:1138px;top:756.1px;width:27.700000000000045px;height:27.899999999999977px;border:1px solid #d3dff5;border-radius:3px;background:#fff"></div>
<svg class="a" style="left:1040px;top:750px" width="130" height="40" viewBox="1040 750 130 40"><g fill="none" stroke="#3b4252" stroke-width="1.25" stroke-linecap="round" stroke-linejoin="round"><path d="M1056.4 765.9 L1056.4 773.7 M1062.1 765.9 L1058.1 769.8 L1062.1 773.7"/><path d="M1093.6 765.5 L1089.3 769.8 L1093.6 774.1"/><path d="M1117.2 765.5 L1121.5 769.8 L1117.2 774.1"/><path d="M1154.6 765.9 L1154.6 773.7 M1148.9 765.9 L1152.9 769.8 L1148.9 773.7"/></g></svg>
<div class="a" style="left:1197.8px;top:40.5px;width:6px;height:524.5px;border-radius:3px;background:#bfc1c6"></div>
</body></html>
